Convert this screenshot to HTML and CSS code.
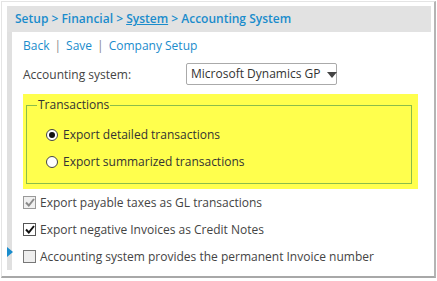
FILE: index.html
```html
<!DOCTYPE html>
<html lang="en">
<head>
    <meta charset="UTF-8">
    <title>Accounting System</title>
    <link rel="stylesheet" href="styles.css">
</head>
<body>
<div class="panel">
    <div class="page">
        <!-- breadcrumb -->
        <div class="crumbs">
            <a href="#">Setup</a> &gt; <a href="#">Financial</a> &gt; <a href="#" class="cur">System</a> &gt; <span>Accounting System</span>
        </div>
        <div class="body">
            <div class="strip"><span class="pointer"></span></div>
            <div class="content">
                <div class="links">
                    <a href="#">Back</a><span class="sep">|</span><a href="#">Save</a><span class="sep">|</span><a href="#">Company Setup</a>
                </div>
                <div class="row">
                    <label class="lbl">Accounting system:</label>
                    <div class="select">Microsoft Dynamics GP<span class="caret"></span></div>
                </div>
                <!-- highlighted group -->
                <div class="hilite">
                    <fieldset class="group">
                        <legend>Transactions</legend>
                        <div class="opts">
                            <div class="opt"><span class="radio on"></span>Export detailed transactions</div>
                            <div class="opt"><span class="radio"></span>Export summarized transactions</div>
                        </div>
                    </fieldset>
                </div>
                <div class="chk">
                    <span class="box dis">
                        <svg width="10" height="9" viewBox="0 0 10 9"><path d="M1 4.5 L3.8 7.5 L9 1" fill="none" stroke="#8a8a8a" stroke-width="2"/></svg>
                    </span>Export payable taxes as GL transactions
                </div>
                <div class="chk">
                    <span class="box">
                        <svg width="10" height="9" viewBox="0 0 10 9"><path d="M1 4.5 L3.8 7.5 L9 1" fill="none" stroke="#111" stroke-width="2"/></svg>
                    </span>Export negative Invoices as Credit Notes
                </div>
                <div class="chk">
                    <span class="box off"></span>Accounting system provides the permanent Invoice number
                </div>
            </div>
        </div>
    </div>
</div>
</body>
</html>
```

FILE: styles.css
```css
* {
    margin: 0;
    padding: 0;
    box-sizing: border-box;
}

body {
    font-family: "Open Sans", "Liberation Sans", sans-serif;
    font-size: 12px;
    color: #444;
    background: #fff;
}

a {
    color: #1a8ccc;
    text-decoration: none;
}

.panel {
    margin: 1px 0 0 1px;
    width: 435px;
    height: 277px;
    border: 1px solid #e4e4e4;
    border-right: 2px solid #b4b4b4;
    border-bottom: 2px solid #a8a8a8;
    padding: 4px 3px 6px 5px;
}

.page {
    height: 100%;
    display: flex;
    flex-direction: column;
}

.crumbs {
    height: 26px;
    background: #e2e2e2;
    color: #1a8ccc;
    font-weight: 600;
    padding: 4px 0 0 8px;
    line-height: 18px;
}

.crumbs a {
    color: #1a8ccc;
}

.crumbs .cur {
    text-decoration: underline;
}

.body {
    flex: 1;
    display: flex;
}

.strip {
    width: 5px;
    background: #e0e0e0;
    position: relative;
}

.pointer {
    position: absolute;
    left: 0;
    top: 215px;
    width: 0;
    height: 0;
    border-top: 5px solid transparent;
    border-bottom: 5px solid transparent;
    border-left: 6px solid #1a8ccc;
}

.content {
    flex: 1;
    padding: 3px 0 0 11px;
}

.links {
    line-height: 22px;
}

.sep {
    color: #888;
    margin: 0 5px;
}

.row {
    display: flex;
    align-items: center;
    margin-top: 6px;
}

.lbl {
    width: 163px;
}

.select {
    width: 151px;
    height: 22px;
    border: 1px solid #aaa;
    border-radius: 2px;
    padding: 0 0 0 4px;
    line-height: 20px;
    color: #333;
    white-space: nowrap;
    display: flex;
    align-items: center;
}

.caret {
    margin: 2px 0 0 7px;
    width: 0;
    height: 0;
    border-left: 5px solid transparent;
    border-right: 5px solid transparent;
    border-top: 6px solid #444;
}

.hilite {
    margin-top: 9px;
    width: 395px;
    height: 95px;
    background: #ffff4d;
    padding: 2px 6px 5px 3px;
}

.group {
    height: 88px;
    border: 1px solid #8bbd4a;
}

.group legend {
    margin-left: 10px;
    padding: 0 1px;
    color: #333;
    line-height: 18px;
}

.opts {
    padding: 7px 0 0 19px;
}

.opt {
    display: flex;
    align-items: center;
    height: 27px;
    color: #333;
}

.radio {
    width: 12px;
    height: 12px;
    border: 1px solid #444;
    border-radius: 50%;
    background: #fff;
    margin-right: 5px;
    display: flex;
    align-items: center;
    justify-content: center;
}

.radio.on::after {
    content: "";
    width: 6px;
    height: 6px;
    border-radius: 50%;
    background: #111;
}

.chk {
    display: flex;
    align-items: center;
    height: 27px;
    color: #444;
}

.chk:first-of-type {
    margin-top: 1px;
}

.box {
    width: 13px;
    height: 13px;
    border: 1px solid #555;
    background: #fff;
    margin-right: 4px;
    display: flex;
    align-items: center;
    justify-content: center;
}

.box.dis {
    border-color: #999;
    background: #f0f0f0;
}

.box.off {
    border-color: #777;
    background: #eee;
}
```
